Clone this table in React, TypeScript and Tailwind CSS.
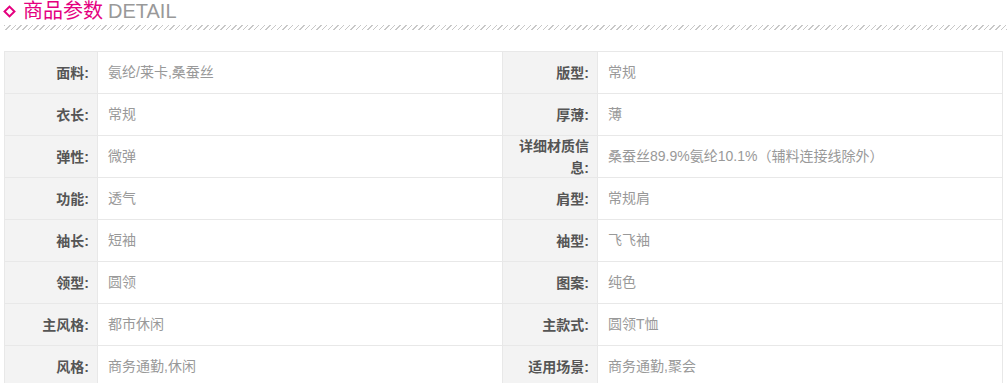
import React from 'react';

const rows: [string, string, string, string][] = [
    ['面料:', '氨纶/莱卡,桑蚕丝', '版型:', '常规'],
    ['衣长:', '常规', '厚薄:', '薄'],
    ['弹性:', '微弹', '详细材质信息:', '桑蚕丝89.9%氨纶10.1%（辅料连接线除外）'],
    ['功能:', '透气', '肩型:', '常规肩'],
    ['袖长:', '短袖', '袖型:', '飞飞袖'],
    ['领型:', '圆领', '图案:', '纯色'],
    ['主风格:', '都市休闲', '主款式:', '圆领T恤'],
    ['风格:', '商务通勤,休闲', '适用场景:', '商务通勤,聚会'],
];

const font = { fontFamily: '"Liberation Sans", "Noto Sans CJK SC", sans-serif' };

// label cell: fixed height so a wrapped label doesn't stretch the row
const Label = ({ text }: { text: string }) => (
    <td className="bg-[#f3f3f3] border border-[#e8e8e8] p-0">
        <div className="h-[41px] flex items-center justify-end text-right pr-[8px] pl-[4px] font-bold text-[#555] leading-[22px]">
            {text}
        </div>
    </td>
);

const Value = ({ text }: { text: string }) => (
    <td className="border border-[#e8e8e8] p-0">
        <div className="h-[41px] flex items-center pl-[10px] text-[#999]">{text}</div>
    </td>
);

export default function App() {
    return (
        <div className="w-[1007px] h-[383px] overflow-hidden bg-white" style={font}>
            {/* Title */}
            <div className="flex items-center h-[22px] pl-[5px]">
                <span className="w-[9px] h-[9px] rotate-45 border-2 border-[#e4007f] mr-[9px]" />
                <span className="text-[20px] leading-[22px] text-[#e4007f]">商品参数</span>
                <span className="text-[20px] leading-[22px] text-[#999] ml-[5px]">DETAIL</span>
            </div>
            <div className="ml-[4px] mt-[3px] h-[5px] bg-[repeating-linear-gradient(135deg,#c8c8c8_0,#c8c8c8_1px,transparent_1px,transparent_4px)]" />

            {/* Parameter table */}
            <table className="ml-[4px] mt-[21px] w-[999px] border-collapse text-[14px] table-fixed">
                <colgroup>
                    <col className="w-[93px]" />
                    <col className="w-[405px]" />
                    <col className="w-[95px]" />
                    <col />
                </colgroup>
                <tbody>
                    {rows.map((r, i) => (
                        <tr key={i}>
                            <Label text={r[0]} />
                            <Value text={r[1]} />
                            <Label text={r[2]} />
                            <Value text={r[3]} />
                        </tr>
                    ))}
                </tbody>
            </table>
        </div>
    );
}
